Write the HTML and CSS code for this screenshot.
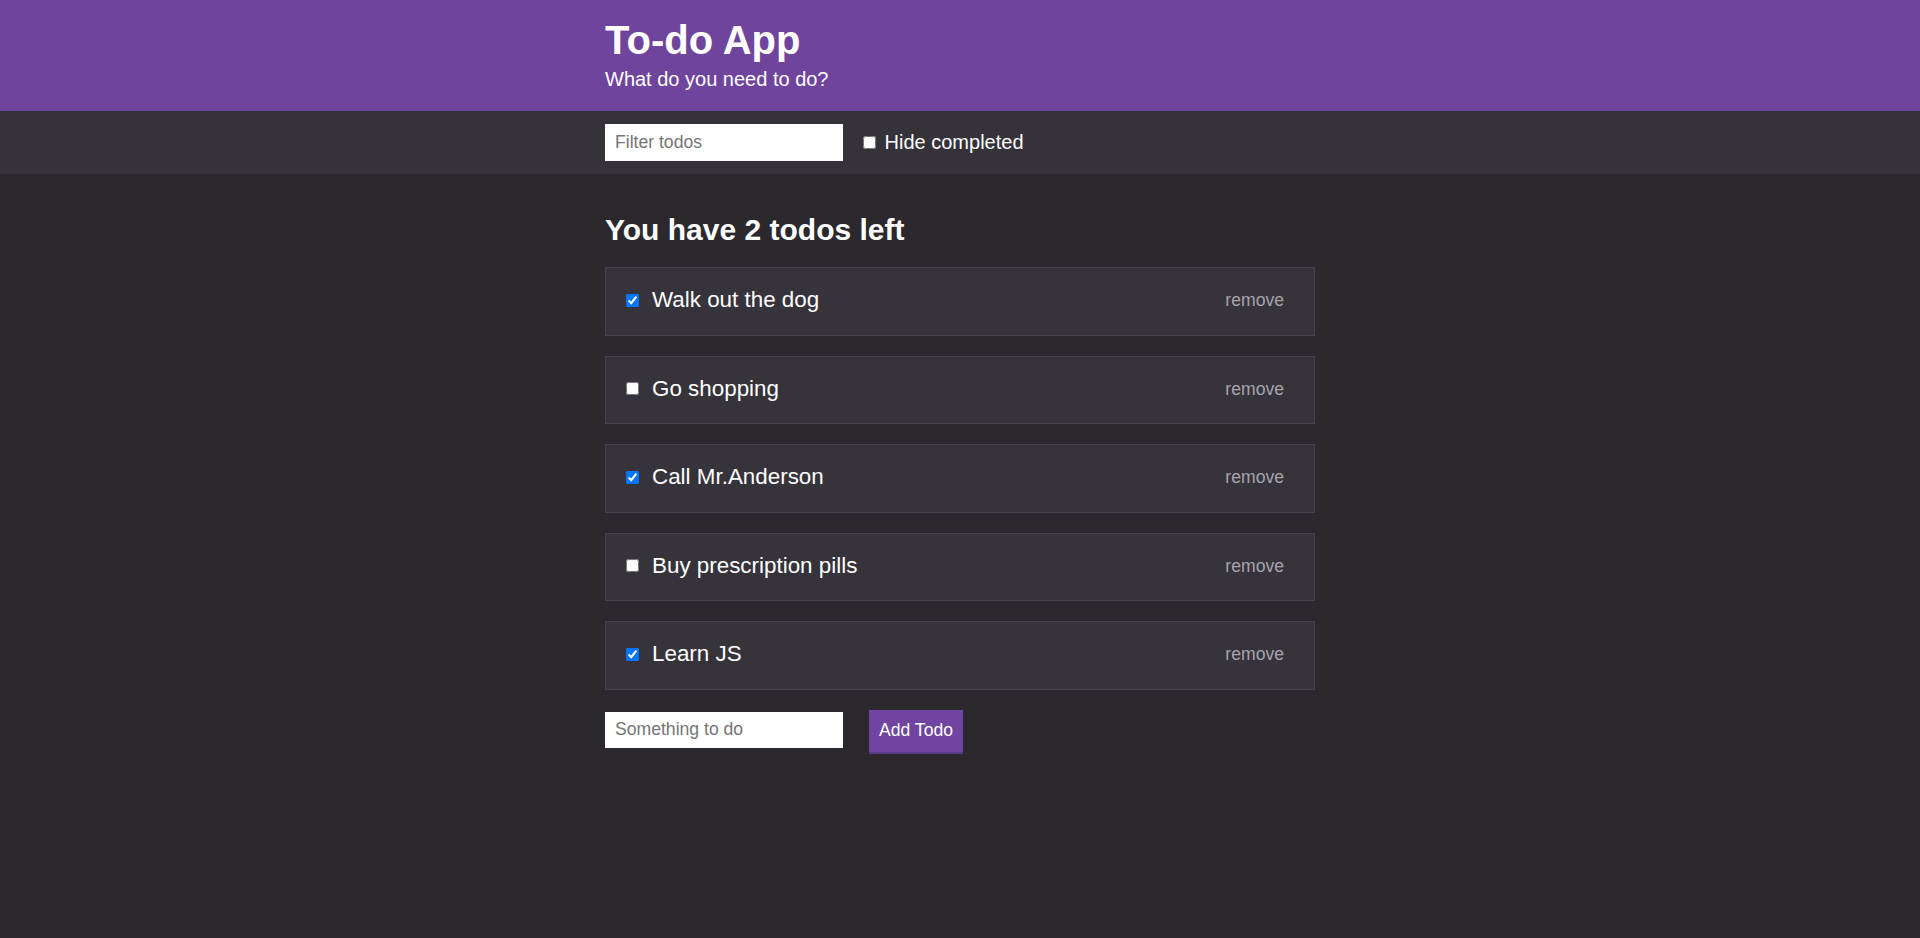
FILE: index.html
```html
<!DOCTYPE html>
<html lang="en">
<head>
<meta charset="utf-8">
<title>To-do App</title>
<link rel="stylesheet" href="styles.css">
</head>
<body>
<header class="header">
  <div class="container header-inner">
    <h1 class="title">To-do App</h1>
    <p class="subtitle">What do you need to do?</p>
  </div>
</header>
<div class="toolbar">
  <div class="container toolbar-inner">
    <input class="text-input" type="text" placeholder="Filter todos">
    <label class="hide-label"><input type="checkbox"> Hide completed</label>
  </div>
</div>
<main class="container main">
  <h2 class="count">You have 2 todos left</h2>
  <ul class="todo-list">
    <li class="todo"><input type="checkbox" checked><span class="todo-text">Walk out the dog</span><span class="remove">remove</span></li>
    <li class="todo"><input type="checkbox"><span class="todo-text">Go shopping</span><span class="remove">remove</span></li>
    <li class="todo"><input type="checkbox" checked><span class="todo-text">Call Mr.Anderson</span><span class="remove">remove</span></li>
    <li class="todo"><input type="checkbox"><span class="todo-text">Buy prescription pills</span><span class="remove">remove</span></li>
    <li class="todo"><input type="checkbox" checked><span class="todo-text">Learn JS</span><span class="remove">remove</span></li>
  </ul>
  <form class="add-form">
    <input class="text-input add-input" type="text" placeholder="Something to do">
    <button class="add-btn" type="button">Add Todo</button>
  </form>
</main>
</body>
</html>
```
FILE: styles.css
```css
html, body {
  margin: 0;
  padding: 0;
}
body {
  background: #2b292e;
  color: #ffffff;
  font-family: "Liberation Sans", Arial, sans-serif;
  min-height: 938px;
}
.container {
  width: 710px;
  margin: 0 auto;
}
.header {
  background: #6f449d;
}
.header-inner {
  padding: 17px 0 20px;
}
.title {
  margin: 0;
  font-size: 40px;
  line-height: 46px;
  font-weight: bold;
}
.subtitle {
  margin: 5px 0 0;
  font-size: 20px;
  line-height: 23px;
}
.toolbar {
  background: #353239;
}
.toolbar-inner {
  padding: 13px 0;
  display: flex;
  align-items: center;
}
.text-input {
  box-sizing: border-box;
  width: 238px;
  height: 37px;
  border: none;
  outline: none;
  margin: 0;
  padding: 0 10px;
  background: #ffffff;
  font-family: "Liberation Sans", Arial, sans-serif;
  font-size: 17.6px;
  color: #222;
}
.text-input::placeholder {
  color: #757575;
}
.hide-label {
  margin-left: 16px;
  font-size: 20px;
  line-height: 23px;
}
.main {
  padding-top: 39px;
}
.count {
  margin: 0 0 20px;
  font-size: 30px;
  line-height: 34px;
  font-weight: bold;
}
.todo-list {
  list-style: none;
  margin: 0;
  padding: 0;
}
.todo {
  display: flex;
  align-items: center;
  background: #36333b;
  border: 1px solid #46434b;
  padding: 19px 16px 21px;
  margin-bottom: 20px;
  line-height: 26.5px;
}
.todo input {
  margin: 3px 3px 3px 4px;
}
.todo-text {
  margin-left: 10px;
  font-size: 22.4px;
  flex: 1;
}
.remove {
  font-size: 17.6px;
  color: #a6a4aa;
  padding: 0 14px;
}
.add-form {
  display: flex;
  align-items: flex-start;
  margin: 0;
}
.add-input {
  margin-top: 2px;
  height: 36.5px;
}
.add-btn {
  box-sizing: border-box;
  margin-left: 26px;
  height: 44px;
  padding: 0 10px;
  background: #7044a0;
  color: #ffffff;
  border: none;
  border-bottom: 2px solid #5d3a88;
  font-family: "Liberation Sans", Arial, sans-serif;
  font-size: 17.6px;
}
```
